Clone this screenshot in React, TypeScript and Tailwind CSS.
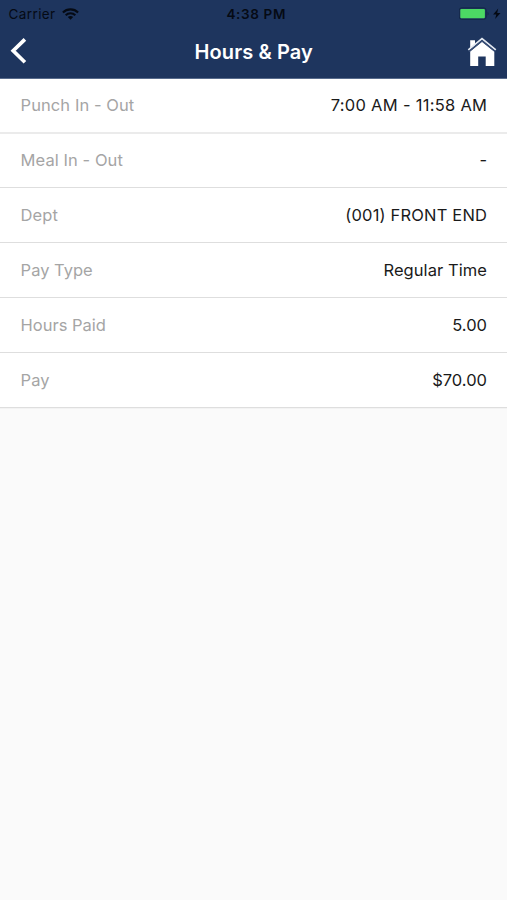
type Row = { label: string; value: string; labelSpacing: string; valueSpacing: string };

const rows: Row[] = [
  { label: 'Punch In - Out', value: '7:00 AM - 11:58 AM', labelSpacing: 'tracking-[0.07px]', valueSpacing: 'tracking-[0.28px] -mr-[0.28px]' },
  { label: 'Meal In - Out', value: '-', labelSpacing: 'tracking-[0.07px]', valueSpacing: 'tracking-normal' },
  { label: 'Dept', value: '(001) FRONT END', labelSpacing: 'tracking-[0.07px]', valueSpacing: 'tracking-[0.18px] -mr-[0.18px]' },
  { label: 'Pay Type', value: 'Regular Time', labelSpacing: 'tracking-normal', valueSpacing: 'tracking-[0.07px]' },
  { label: 'Hours Paid', value: '5.00', labelSpacing: 'tracking-normal', valueSpacing: 'tracking-normal' },
  { label: 'Pay', value: '$70.00', labelSpacing: 'tracking-normal', valueSpacing: 'tracking-normal' },
];

function WifiIcon() {
  return (
    <svg width="17" height="12" viewBox="0 0 17 12" fill="none" stroke="#050a14" strokeWidth="2.1">
      <path d="M0.9 4.5C5.1 0.3 11.9 0.3 16.1 4.5" />
      <path d="M3.7 7.3C6.4 4.6 10.6 4.6 13.3 7.3" />
      <path d="M8.5 11.8L5.8 9.1C7.3 7.7 9.7 7.7 11.2 9.1Z" fill="#050a14" stroke="none" />
    </svg>
  );
}

function BatteryIcon() {
  return (
    <svg width="43" height="14" viewBox="0 0 43 14">
      <rect x="0.2" y="0.9" width="27" height="11.4" rx="2.4" fill="none" stroke="#132746" strokeWidth="1" />
      <rect x="1.3" y="2" width="24.6" height="9.2" rx="1" fill="#4cd964" />
      <path d="M28.5 4.8C30 5.4 30 8 28.5 8.6Z" fill="#132746" />
      <path d="M39.2 1.6L34.1 7.6H37.3L36.1 12L41.5 5.9H38.2Z" fill="#050a14" />
    </svg>
  );
}

function HomeIcon() {
  return (
    <svg width="30" height="30" viewBox="0 0 30 30">
      <path d="M3.2 3.2H8V8L3.2 12Z" fill="#fff" />
      <path d="M3.2 14.4L15 4.8L27.3 14.4V29H18.7V19.4H11.2V29H3.2Z" fill="#fff" />
      <path d="M1.3 12.9L15 1.7L28.8 12.9" fill="none" stroke="#e4e9f1" strokeWidth="1.7" />
      <path d="M2 14.6L15 4L28 14.6" fill="none" stroke="#3b5179" strokeWidth="1.2" />
    </svg>
  );
}

export default function App() {
  return (
    <div className="flex h-[900px] w-[507px] flex-col overflow-hidden bg-[#fafafa] font-['Inter',sans-serif]">
      <header className="h-[79px] shrink-0 border-b border-[#586b8c] bg-[#1e355e]">
        <div className="grid h-[27px] grid-cols-3 items-center pl-[8.5px] pr-[5px] text-[#050a14]">
          <div className="flex items-center gap-[6px]">
            <span className="pt-px text-[13.5px] leading-[26px] tracking-[0.4px]">Carrier</span>
            <WifiIcon />
          </div>
          <span className="pl-[2px] pt-px text-center text-[13.5px] font-semibold leading-[26px] tracking-[0.65px]">4:38 PM</span>
          <div className="flex justify-end"><BatteryIcon /></div>
        </div>
        <div className="grid h-[48px] grid-cols-3 items-center pl-[10px] pr-[10.5px]">
          <svg width="18" height="28" viewBox="0 0 18 28" fill="none" stroke="#fff" strokeWidth="3.7">
            <path d="M14.9 2.3L3.2 13.7L14.9 25.2" />
          </svg>
          <h1 className="whitespace-nowrap pl-px pt-[2px] text-center text-[20px] font-[560] leading-[46px] tracking-[0.12px] text-white">Hours &amp; Pay</h1>
          <div className="flex justify-end pt-[2px]"><HomeIcon /></div>
        </div>
      </header>
      <dl>
        {rows.map((r) => (
          <div key={r.label} className="flex h-[55px] items-center justify-between border-b border-[#dedede] bg-white pl-[20.6px] pr-[20px] text-[16.5px] leading-[24px] shadow-[0_1px_0_#f3f3f3] first:border-b-2 first:border-[#ebebeb] first:pb-px first:shadow-none nth-2:h-[54px] nth-2:pb-px">
            <dt className={`text-[#a5a5a5] ${r.labelSpacing}`}>{r.label}</dt>
            <dd className={`text-[#1a1a1a] ${r.valueSpacing}`}>{r.value}</dd>
          </div>
        ))}
      </dl>
    </div>
  );
}
